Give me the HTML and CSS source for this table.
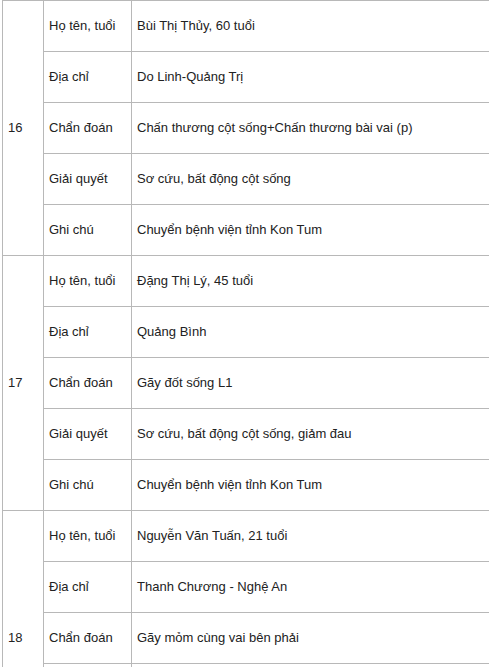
FILE: index.html
```html
<!DOCTYPE html>
<html lang="vi">
<head>
<meta charset="utf-8">
<link rel="stylesheet" href="styles.css">
</head>
<body>
<table class="records">
  <colgroup>
    <col class="c-no">
    <col class="c-label">
    <col class="c-value">
  </colgroup>
  <tbody>
    <tr><td class="no" rowspan="5">16</td><td>Họ tên, tuổi</td><td>Bùi Thị Thủy, 60 tuổi</td></tr>
    <tr><td>Địa chỉ</td><td>Do Linh-Quảng Trị</td></tr>
    <tr><td>Chẩn đoán</td><td>Chấn thương cột sống+Chấn thương bài vai (p)</td></tr>
    <tr><td>Giải quyết</td><td>Sơ cứu, bất động cột sống</td></tr>
    <tr><td>Ghi chú</td><td>Chuyển bệnh viện tỉnh Kon Tum</td></tr>
    <tr><td class="no" rowspan="5">17</td><td>Họ tên, tuổi</td><td>Đặng Thị Lý, 45 tuổi</td></tr>
    <tr><td>Địa chỉ</td><td>Quảng Bình</td></tr>
    <tr><td>Chẩn đoán</td><td>Gãy đốt sống L1</td></tr>
    <tr><td>Giải quyết</td><td>Sơ cứu, bất động cột sống, giảm đau</td></tr>
    <tr><td>Ghi chú</td><td>Chuyển bệnh viện tỉnh Kon Tum</td></tr>
    <tr><td class="no" rowspan="5">18</td><td>Họ tên, tuổi</td><td>Nguyễn Văn Tuấn, 21 tuổi</td></tr>
    <tr><td>Địa chỉ</td><td>Thanh Chương - Nghệ An</td></tr>
    <tr><td>Chẩn đoán</td><td>Gãy mỏm cùng vai bên phải</td></tr>
    <tr><td>Giải quyết</td><td>Sơ cứu, bất động</td></tr>
    <tr><td>Ghi chú</td><td>Chuyển bệnh viện tỉnh Kon Tum</td></tr>
  </tbody>
</table>
</body>
</html>
```
FILE: styles.css
```css
html {
  overflow: hidden;
  background: #fff;
}
body {
  margin: 0;
  padding: 0 0 0 2px;
  font-family: "Liberation Sans", Arial, sans-serif;
  font-size: 13px;
  color: #222;
}
.records {
  border-collapse: collapse;
  table-layout: fixed;
  width: 640px;
}
.c-no { width: 41px; }
.c-label { width: 88px; }
.c-value { width: 511px; }
.records td {
  border: 1px solid #b8b8b8;
  padding: 0 5px 1px;
  vertical-align: middle;
  box-sizing: border-box;
  height: 51px;
  white-space: nowrap;
}
```
